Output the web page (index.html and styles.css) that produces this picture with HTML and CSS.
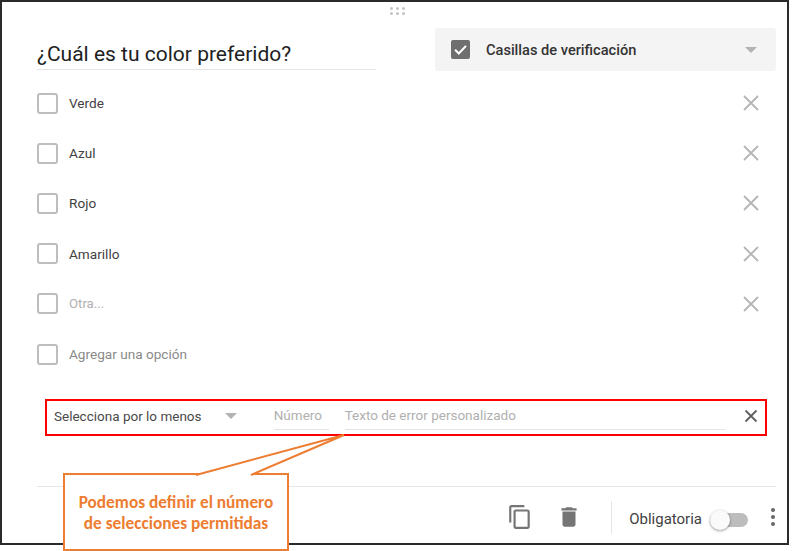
FILE: index.html
```html
<!DOCTYPE html>
<html lang="es">
<head>
<meta charset="utf-8">
<title>Pregunta</title>
<link rel="stylesheet" href="styles.css">
</head>
<body>
<main class="card">
  <div class="drag" aria-hidden="true"><i></i><i></i><i></i><i></i><i></i><i></i></div>
  <header class="head">
    <h1 class="title">¿Cuál es tu color preferido?</h1>
    <div class="type">
      <svg class="type-check" viewBox="0 0 20 20"><rect width="20" height="20" rx="2" fill="#6f6f6f"/><path d="M4.3 10.3l3.9 3.900 7.600-8" fill="none" stroke="#fff" stroke-width="2.200"/></svg>
      <span class="type-name">Casillas de verificación</span>
      <span class="caret type-caret"></span>
    </div>
  </header>
  <ul class="options">
    <li class="option"><span class="box"></span><span class="label">Verde</span><svg class="x" viewBox="0 0 16 16"><path d="M1 1l14 14M15 1L1 15"/></svg></li>
    <li class="option"><span class="box"></span><span class="label">Azul</span><svg class="x" viewBox="0 0 16 16"><path d="M1 1l14 14M15 1L1 15"/></svg></li>
    <li class="option"><span class="box"></span><span class="label">Rojo</span><svg class="x" viewBox="0 0 16 16"><path d="M1 1l14 14M15 1L1 15"/></svg></li>
    <li class="option"><span class="box"></span><span class="label">Amarillo</span><svg class="x" viewBox="0 0 16 16"><path d="M1 1l14 14M15 1L1 15"/></svg></li>
    <li class="option"><span class="box"></span><span class="label faint">Otra...</span><svg class="x" viewBox="0 0 16 16"><path d="M1 1l14 14M15 1L1 15"/></svg></li>
    <li class="option"><span class="box"></span><span class="label muted">Agregar una opción</span></li>
  </ul>
  <section class="rule">
    <span class="rule-kind">Selecciona por lo menos</span>
    <span class="caret rule-caret"></span>
    <span class="field field-num">Número</span>
    <span class="field field-err">Texto de error personalizado</span>
    <svg class="x x-dark" viewBox="0 0 16 16"><path d="M2.500 2.500l11 11M13.500 2.500l-11 11"/></svg>
  </section>
  <footer class="foot">
    <svg class="ico" viewBox="0 0 24 24"><path fill="#757575" d="M16 1H4c-1.100 0-2 .9-2 2v14h2V3h12V1zm3 4H8c-1.100 0-2 .9-2 2v14c0 1.100.9 2 2 2h11c1.100 0 2-.9 2-2V7c0-1.100-.9-2-2-2zm0 16H8V7h11v14z"/></svg>
    <svg class="ico ico-trash" viewBox="0 0 24 24"><path fill="#757575" d="M6 19c0 1.100.9 2 2 2h8c1.100 0 2-.9 2-2V7H6v12zM19 4h-3.500l-1-1h-5l-1 1H5v2h14V4z"/></svg>
    <span class="sep"></span>
    <span class="req">Obligatoria</span>
    <span class="toggle"><span class="knob"></span></span>
    <span class="more"><i></i><i></i><i></i></span>
  </footer>
</main>
<aside class="callout">
  <svg class="callout-tail" viewBox="0 0 290 90"><path d="M131 41L279 1 186 41"/></svg>
  <p class="callout-text">Podemos definir el número de selecciones permitidas</p>
</aside>
</body>
</html>
```
FILE: styles.css
```css
* { box-sizing: border-box; }
html, body { margin: 0; padding: 0; background: #fff; }
body { width: 800px; height: 551px; overflow: hidden; position: relative; font-family: Roboto, "Liberation Sans", sans-serif; }
.card { width: 789px; height: 545px; border: 2px solid #2b2b2b; background: #fff; position: relative; padding: 26px 11px 0 35px; display: flex; flex-direction: column; }
.drag { position: absolute; left: 388px; top: 5px; display: grid; grid-template-columns: repeat(3, 3px); gap: 2px 3px; }
.drag i { width: 3px; height: 3px; border-radius: 50%; background: #c4c4c4; }
.head { display: flex; justify-content: space-between; height: 43px; }
.title { margin: 0; width: 339px; height: 42px; padding-top: 12px; border-bottom: 1px solid #e6e6e6; font-size: 21px; line-height: 29px; font-weight: 400; color: #212121; white-space: nowrap; }
.type { width: 341px; height: 43px; background: #f4f4f4; border-radius: 3px; display: flex; align-items: center; padding: 0 19px 0 16px; }
.type-check { width: 19px; height: 19px; margin-right: 16px; }
.type-name { font-size: 14.600px; font-weight: 500; color: #333; flex: 1; }
.caret { width: 0; height: 0; border-left: 6.500px solid transparent; border-right: 6.500px solid transparent; border-top: 6.500px solid #b3b3b3; }
.options { list-style: none; margin: 7px 0 0; padding: 0; }
.option { height: 50.200px; display: flex; align-items: center; }
.box { width: 21px; height: 21px; border: 2px solid #bdbdbd; border-radius: 3px; flex: none; }
.label { margin-left: 11px; font-size: 13.600px; color: #424242; flex: 1; }
.label.faint { color: #b0b0b0; font-size: 13.200px; }
.label.muted { color: #8a8a8a; }
.x { width: 16px; height: 16px; margin-right: 17px; fill: none; stroke: #b5b5b5; stroke-width: 1.800; flex: none; }
.x-dark { stroke: #5f5f5f; margin-right: 6px; }
.rule { margin: 20px 0 0 8px; width: 722px; height: 37px; border: 2px solid #f00; display: flex; align-items: center; padding: 0 0 4px 7px; font-size: 13.500px; color: #4a4a4a; }
.rule-kind { width: 171px; white-space: nowrap; }
.rule-caret { margin-right: 37px; }
.field { color: #b0b0b0; height: 31px; line-height: 33px; border-bottom: 1px solid #e4e4e4; align-self: flex-end; white-space: nowrap; }
.field-num { width: 55px; margin-right: 16px; }
.field-err { width: 381px; margin-right: 18px; }
.foot { margin-top: 50px; width: 739px; height: 56px; border-top: 1px solid #e6e6e6; display: flex; align-items: center; justify-content: flex-end; padding-top: 5px; }
.ico { width: 26px; height: 26px; margin-right: 23px; }
.ico-trash { margin-right: 29px; }
.sep { width: 1px; height: 33px; background: #e6e6e6; margin-right: 17px; }
.req { font-size: 15px; color: #424242; margin: 4px 8px 0 0; }
.toggle { width: 38px; height: 14px; background: #bdbdbd; border-radius: 7px; position: relative; margin: 5px 23px 0 0; }
.knob { position: absolute; left: 0; top: -3px; width: 20px; height: 20px; border-radius: 50%; background: #fafafa; box-shadow: 0 1px 3px rgba(0,0,0,.4); }
.more { display: flex; flex-direction: column; gap: 3px; width: 4px; margin-right: 1px; }
.more i { width: 4px; height: 4px; border-radius: 50%; background: #666; }
.callout { position: absolute; left: 63px; top: 473px; width: 226px; height: 78px; background: #fff; border: 2px solid #ed7d31; display: flex; align-items: center; justify-content: center; }
.callout-tail { position: absolute; left: 0; top: -41px; width: 290px; height: 90px; overflow: visible; pointer-events: none; }
.callout-tail path { fill: #fff; stroke: #ed7d31; stroke-width: 2; }
.callout-text { margin: 2px auto 0; width: 206px; text-align: center; font-family: Carlito, "Open Sans", sans-serif; font-weight: 700; font-size: 17.300px; line-height: 21px; color: #ed7d31; position: relative; }
```
